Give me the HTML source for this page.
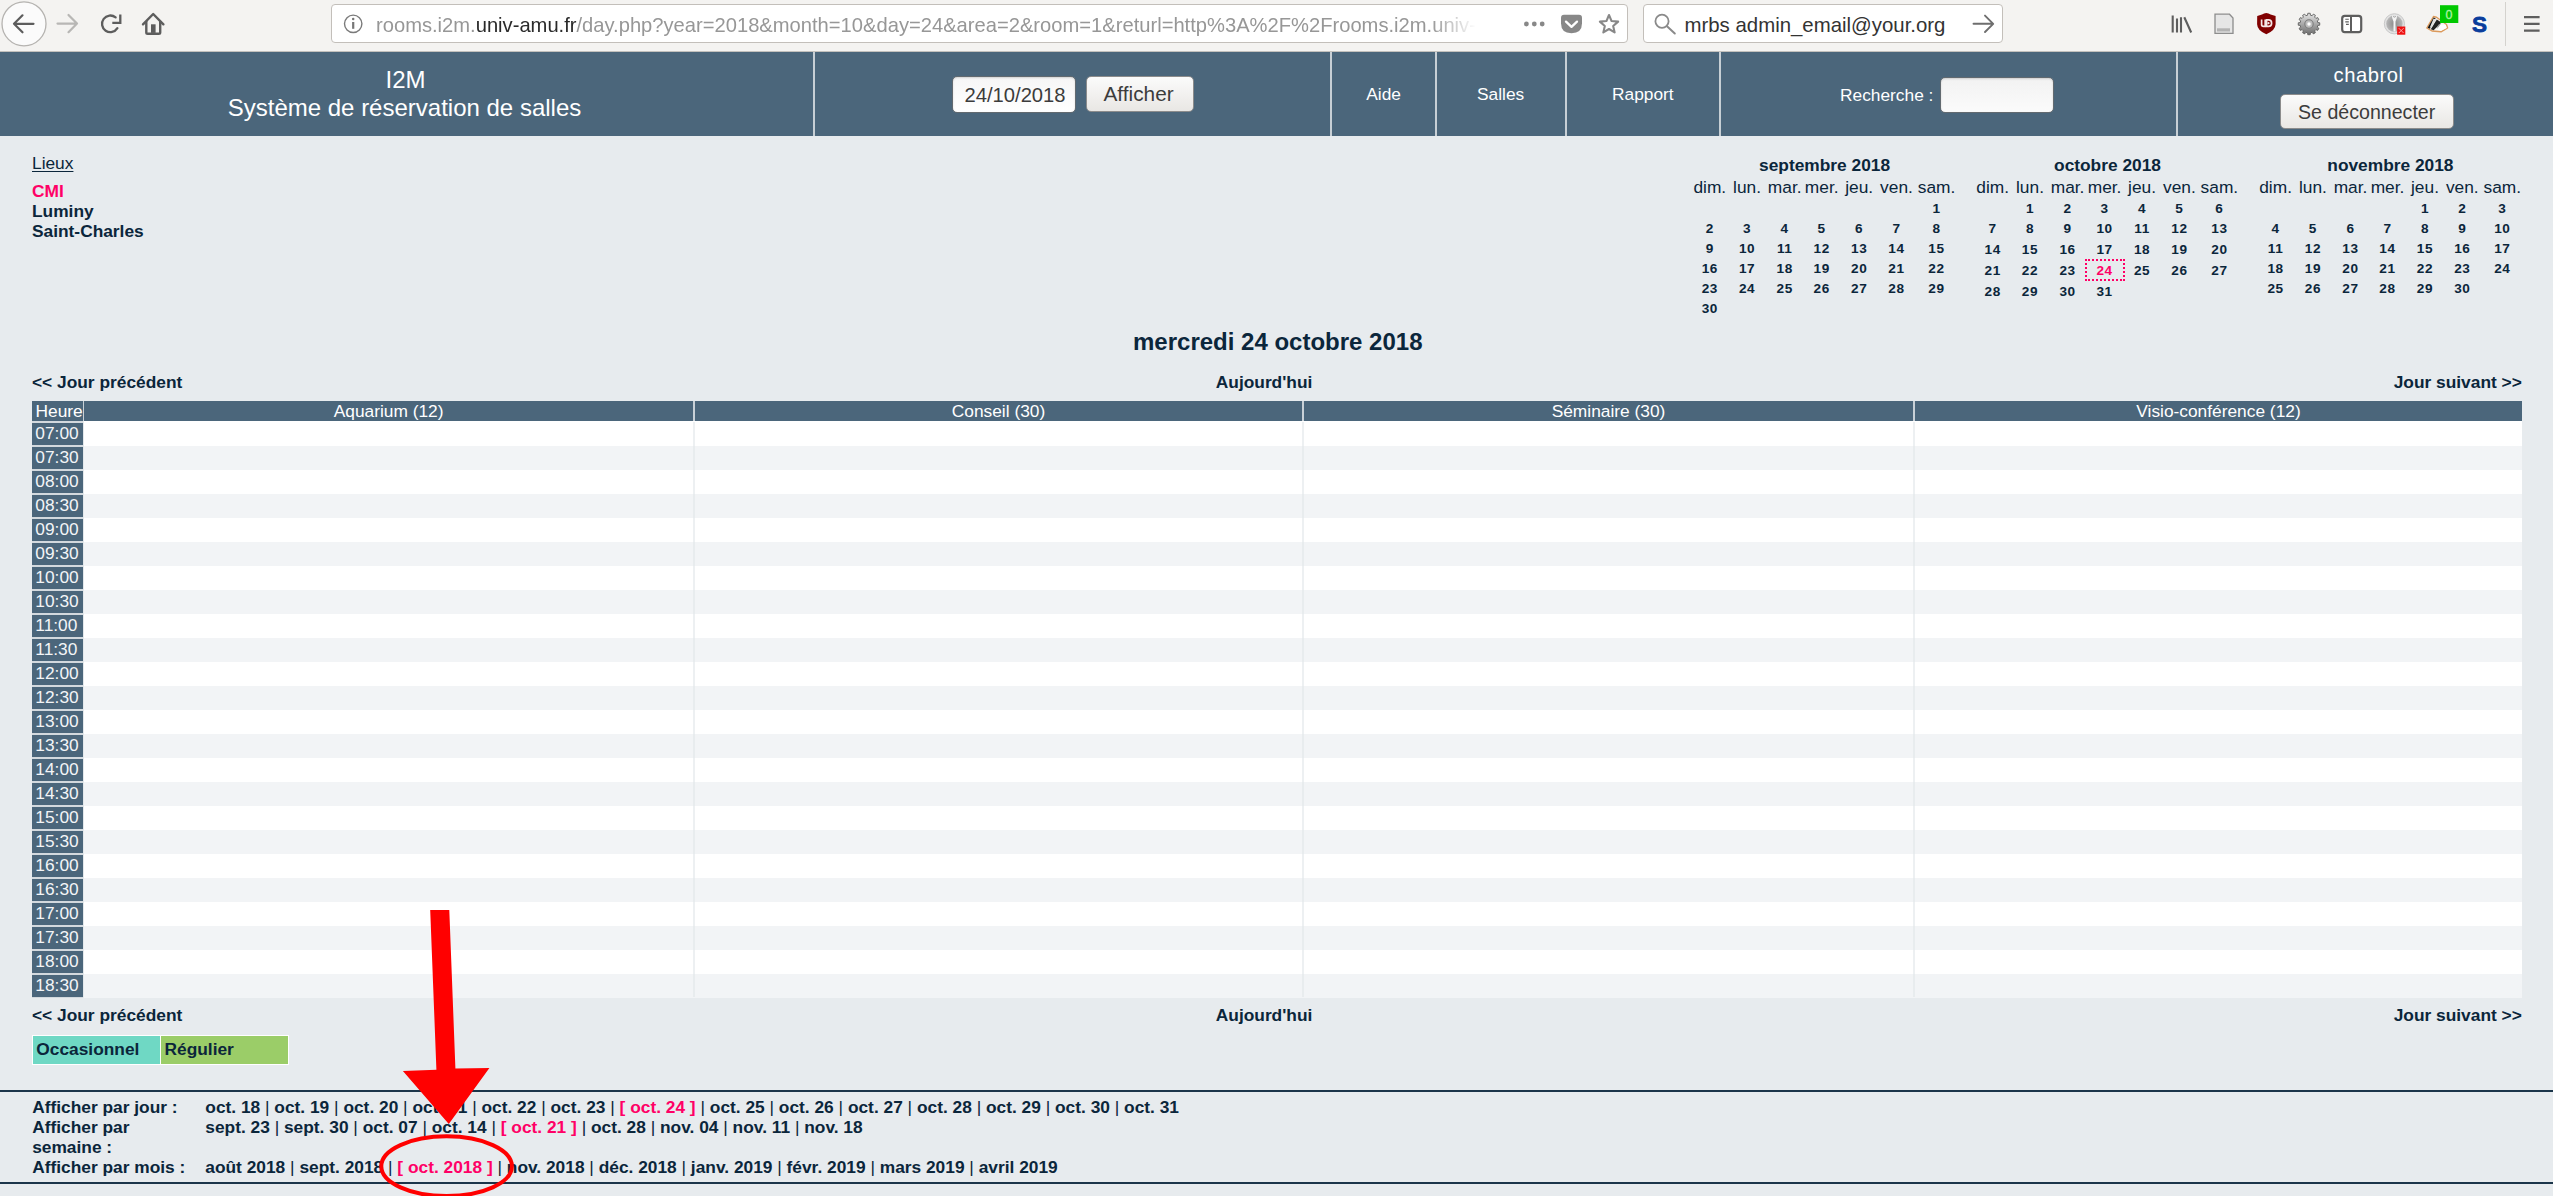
<!DOCTYPE html>
<html><head><meta charset="utf-8"><title>MRBS</title>
<style>
html,body{margin:0;padding:0}
body{width:2553px;height:1196px;overflow:hidden;background:#e7ebee;font-family:"Liberation Sans", sans-serif;color:#0b263b;position:relative}
.a{position:absolute;white-space:pre;line-height:1;font-family:"Liberation Sans", sans-serif}
.r{position:absolute}
svg.r{overflow:visible}
</style></head><body>
<div class="r" style="left:0px;top:0px;width:2553px;height:51px;background:#f4f3f1"></div>
<div class="r" style="left:0px;top:51px;width:2553px;height:1px;background:#c3c1bd"></div>
<svg class="r" style="left:0;top:0" width="2553" height="51" viewBox="0 0 2553 51">
<circle cx="24" cy="23.8" r="22" fill="#fbfbfb" stroke="#b5b3b0" stroke-width="1.3"/>
<path d="M33.5 23.8H14.5M22.5 15.3L14 23.8L22.5 32.3" fill="none" stroke="#5d5d5d" stroke-width="2.2" stroke-linecap="round" stroke-linejoin="round"/>
<path d="M57.5 23.6H77M68.5 15L77 23.6L68.5 32.2" fill="none" stroke="#b8b7b5" stroke-width="2.2" stroke-linecap="round" stroke-linejoin="round"/>
<path d="M117.4 28.2A8.3 8.3 0 1 1 115.6 17.4" fill="none" stroke="#5d5d5d" stroke-width="2.3" stroke-linecap="round"/>
<path d="M112.3 22.9H120.3V14.6" fill="none" stroke="#5d5d5d" stroke-width="2.3"/>
<path d="M143 24.3L153.2 14L163.4 24.3" fill="none" stroke="#5d5d5d" stroke-width="2.4" stroke-linecap="round" stroke-linejoin="round"/>
<path d="M146.3 21V32.5Q146.3 33.8 147.6 33.8H158.8Q160.2 33.8 160.2 32.5V21" fill="none" stroke="#5d5d5d" stroke-width="2.4"/>
<rect x="151" y="24.3" width="4.6" height="8.6" fill="#5d5d5d"/>
</svg>
<div class="r" style="left:331px;top:4px;width:1297px;height:39.2px;background:#fff;border:1px solid #c3bfba;border-radius:4px;box-sizing:border-box"></div>
<svg class="r" style="left:0;top:0" width="2553" height="51" viewBox="0 0 2553 51">
<circle cx="353.2" cy="23.8" r="8.7" fill="none" stroke="#7a7a7a" stroke-width="1.4"/>
<rect x="352.1" y="22" width="2.2" height="6.8" fill="#767676"/><circle cx="353.2" cy="19.1" r="1.25" fill="#767676"/>
<circle cx="1526.4" cy="24" r="2.4" fill="#888"/><circle cx="1534.3" cy="24" r="2.4" fill="#888"/><circle cx="1542.2" cy="24" r="2.4" fill="#888"/>
<path d="M1561 17.8Q1561 14.7 1564 14.7H1579Q1582 14.7 1582 17.8V23.3Q1582 33.2 1571.5 33.2Q1561 33.2 1561 23.3Z" fill="#888"/>
<path d="M1566 21.6L1571.5 26.8L1577 21.6" fill="none" stroke="#fff" stroke-width="2.3" stroke-linecap="round" stroke-linejoin="round"/>
<path d="M1609.00 15.00L1611.59 21.04L1618.13 21.63L1613.18 25.96L1614.64 32.37L1609.00 29.00L1603.36 32.37L1604.82 25.96L1599.87 21.63L1606.41 21.04Z" fill="none" stroke="#888" stroke-width="2.1" stroke-linejoin="round"/>
</svg>
<div class="a" style="left:376px;top:15.43px;font-size:20.17px;color:#979797;width:1100px;overflow:hidden;-webkit-mask-image:linear-gradient(to right,#000 1055px,transparent 1100px)">rooms.i2m.<span style="color:#2a2a2a">univ-amu.fr</span>/day.php?year=2018&amp;month=10&amp;day=24&amp;area=2&amp;room=1&amp;returl=http%3A%2F%2Frooms.i2m.univ-amu.fr</div>
<div class="r" style="left:1643px;top:4px;width:360px;height:39.2px;background:#fff;border:1px solid #c3bfba;border-radius:4px;box-sizing:border-box"></div>
<svg class="r" style="left:0;top:0" width="2553" height="51" viewBox="0 0 2553 51">
<circle cx="1662" cy="21.3" r="6.6" fill="none" stroke="#8a8a8a" stroke-width="1.8"/>
<path d="M1667 26.3L1674.8 33.5" stroke="#8a8a8a" stroke-width="2" stroke-linecap="round"/>
<path d="M1973.5 23.8H1993M1985 15.6L1993.2 23.8L1985 32" fill="none" stroke="#6e6e6e" stroke-width="1.9" stroke-linecap="round" stroke-linejoin="round"/>
</svg>
<div class="a" style="left:1684.50px;top:14.53px;font-size:20.4px;font-weight:400;color:#333;">mrbs admin_email@your.org</div>
<svg class="r" style="left:0;top:0" width="2553" height="51" viewBox="0 0 2553 51">
<path d="M2172.7 15.5V32.5M2177 18.5V32.5M2181 17.3V32.5M2184.3 17.3L2191.2 32.5" stroke="#5e5e5e" stroke-width="2.1" fill="none"/>
<path d="M2215 14.2H2229.5L2233 18V33.4H2215Z" fill="#e6e6e6" stroke="#8d8d8d" stroke-width="1.3"/>
<rect x="2217" y="28.3" width="13" height="3.2" fill="#b3b3b3"/>
<path d="M2257.2 16L2262 14.6Q2264 13.2 2266.3 13.1Q2268.6 13.2 2270.6 14.6L2275.6 16V24.3Q2275.3 30.5 2266.3 34.3Q2257.3 30.5 2257.1 24.3Z" fill="#800000"/>
<path d="M2261.6 19.6V24.5Q2261.6 26.4 2263.4 26.4H2265.2V19.6" fill="none" stroke="#f4e6e6" stroke-width="1.7"/>
<path d="M2266.6 19.9H2268.4Q2271.6 19.9 2271.6 23.2Q2271.6 26.4 2268.4 26.4H2266.6Z" fill="none" stroke="#f4e6e6" stroke-width="1.7"/>
<circle cx="2268.5" cy="23.2" r="1.1" fill="#f4e6e6"/>
<defs><linearGradient id="gg" x1="0" y1="0" x2="0" y2="1"><stop offset="0" stop-color="#e6e6e6"/><stop offset="0.5" stop-color="#a9a9a9"/><stop offset="1" stop-color="#6c6c6c"/></linearGradient>
<radialGradient id="kg"><stop offset="0" stop-color="#8a8a8a"/><stop offset="1" stop-color="#b8b8b8"/></radialGradient></defs>
<path d="M2307.81 13.27L2310.19 13.27L2310.42 15.21L2312.17 15.68L2313.34 14.11L2315.39 15.30L2314.62 17.10L2315.90 18.38L2317.70 17.61L2318.89 19.66L2317.32 20.83L2317.79 22.58L2319.73 22.81L2319.73 25.19L2317.79 25.42L2317.32 27.17L2318.89 28.34L2317.70 30.39L2315.90 29.62L2314.62 30.90L2315.39 32.70L2313.34 33.89L2312.17 32.32L2310.42 32.79L2310.19 34.73L2307.81 34.73L2307.58 32.79L2305.83 32.32L2304.66 33.89L2302.61 32.70L2303.38 30.90L2302.10 29.62L2300.30 30.39L2299.11 28.34L2300.68 27.17L2300.21 25.42L2298.27 25.19L2298.27 22.81L2300.21 22.58L2300.68 20.83L2299.11 19.66L2300.30 17.61L2302.10 18.38L2303.38 17.10L2302.61 15.30L2304.66 14.11L2305.83 15.68L2307.58 15.21Z" fill="url(#gg)" stroke="#5f5f5f" stroke-width="0.9" stroke-linejoin="round"/>
<circle cx="2309" cy="24.0" r="4.2" fill="#bdbdbd" stroke="#7a7a7a" stroke-width="1.1"/>
<circle cx="2309" cy="24.0" r="1.7" fill="#fff"/>
<rect x="2342.2" y="15.8" width="19" height="16.4" rx="2.6" fill="#fff" stroke="#5e5e5e" stroke-width="2.2"/>
<path d="M2351 16V32" stroke="#5e5e5e" stroke-width="2"/>
<path d="M2345.3 19.3H2348.8M2345.3 21.9H2348.8M2346 24.4H2348.8" stroke="#5e5e5e" stroke-width="1.1"/>
<circle cx="2394.4" cy="23.8" r="10.1" fill="#e2e2e2" stroke="#c8c8c8" stroke-width="1"/>
<circle cx="2394.4" cy="23.8" r="8.2" fill="url(#kg)"/>
<path d="M2392 15.6H2397L2396.8 18L2395.5 21.5V31.5H2393.5V21.5L2392.2 18Z" fill="#f4f4f4"/>
<path d="M2393.2 16.5Q2394.4 17.6 2395.8 16.5" stroke="#8a8a8a" stroke-width="0.9" fill="none"/>
<rect x="2397.1" y="26.5" width="8.2" height="8.2" fill="#ee1111"/>
<path d="M2398.8 28.2L2403.6 33M2403.6 28.2L2398.8 33" stroke="#ffb0b0" stroke-width="0.9"/>
<path d="M2426.8 28L2433.5 16.5L2436.5 17.2L2441 20.5L2446.5 24.5L2447.6 28L2441 31.8L2432 31Z" fill="#f6f6f6" stroke="#d88a40" stroke-width="1.4" stroke-linejoin="round" opacity="0.85"/>
<path d="M2427.6 27.7L2433.6 17.4L2435.6 18.3L2430 28.8Z" fill="#111"/>
<path d="M2436.8 19.6L2441.5 22.4L2433.6 30.2L2430.8 29.2Z" fill="#222"/>
<path d="M2433.6 18.5L2436 19.6L2431.5 27.5L2429.8 27.6Z" fill="#e0e0e0"/>
<path d="M2440 24.5L2445.8 25L2446.6 28L2441 30.8L2436.5 29.5Z" fill="#fff"/>
<path d="M2438 25L2441.5 23L2437 29Z" fill="#9a9a9a"/>
<rect x="2440" y="5.2" width="18.3" height="17.8" fill="#00c800"/>
<text x="2449.1" y="18.7" font-family="Liberation Sans" font-size="12.5" fill="#b5f5a5" stroke="#9ef0a0" stroke-width="0.3" text-anchor="middle">0</text>
<circle cx="2479.5" cy="24" r="8.5" fill="#fff" opacity="0.6"/>
<text x="2479.6" y="32.3" font-family="Liberation Sans" font-size="22.5" font-weight="700" fill="#0a3d9c" stroke="#0a3d9c" stroke-width="0.8" text-anchor="middle">S</text>
<path d="M2505.5 2V46" stroke="#d4d2ce" stroke-width="1"/>
<path d="M2524 17.1H2539.6M2524 23.9H2539.6M2524 30.6H2539.6" stroke="#5e5e5e" stroke-width="2.4"/>
</svg>
<div class="r" style="left:0px;top:52px;width:2553px;height:84px;background:#4b667b"></div>
<div class="r" style="left:813px;top:52px;width:2px;height:84px;background:#c7cfd5"></div>
<div class="r" style="left:1330px;top:52px;width:2px;height:84px;background:#c7cfd5"></div>
<div class="r" style="left:1434.5px;top:52px;width:2.0px;height:84px;background:#c7cfd5"></div>
<div class="r" style="left:1565px;top:52px;width:2px;height:84px;background:#c7cfd5"></div>
<div class="r" style="left:1718.5px;top:52px;width:2.0px;height:84px;background:#c7cfd5"></div>
<div class="r" style="left:2175.5px;top:52px;width:2.0px;height:84px;background:#c7cfd5"></div>
<div class="a" style="left:-594.50px;width:2000px;text-align:center;top:67.68px;font-size:24px;font-weight:400;color:#fff;">I2M</div>
<div class="a" style="left:-595.50px;width:2000px;text-align:center;top:95.98px;font-size:24px;font-weight:400;color:#fff;">Système de réservation de salles</div>
<div class="r" style="left:951.5px;top:76px;width:124.0px;height:36.5px;background:linear-gradient(#f6f6f6,#fff);border:1px solid #626a70;border-radius:5px;box-sizing:border-box;box-shadow:inset 0 1px 2px rgba(0,0,0,.15)"></div>
<div class="a" style="left:964.50px;top:84.90px;font-size:20.2px;font-weight:400;color:#3c3c3c;">24/10/2018</div>
<div class="r" style="left:1085.5px;top:76px;width:108.5px;height:35.5px;background:linear-gradient(#fbfbfb,#e9e7e4);border:1px solid #8c8c8c;border-radius:5px;box-sizing:border-box"></div>
<div class="a" style="left:1103.50px;top:84.39px;font-size:20.8px;font-weight:400;color:#3c3c3c;">Afficher</div>
<div class="a" style="left:1366.30px;top:85.63px;font-size:17.33px;font-weight:400;color:#fff;">Aide</div>
<div class="a" style="left:1477.00px;top:85.63px;font-size:17.33px;font-weight:400;color:#fff;">Salles</div>
<div class="a" style="left:1612.00px;top:85.63px;font-size:17.33px;font-weight:400;color:#fff;">Rapport</div>
<div class="a" style="left:1840.00px;top:87.13px;font-size:17.33px;font-weight:400;color:#fff;">Recherche :</div>
<div class="r" style="left:1939.5px;top:76.5px;width:114.5px;height:36.0px;background:linear-gradient(#f2f2f2,#fbfbfb);border:1px solid #626a70;border-radius:5px;box-sizing:border-box;box-shadow:inset 0 1px 2px rgba(0,0,0,.15)"></div>
<div class="a" style="left:2333.50px;top:65.10px;font-size:20.2px;font-weight:400;color:#fff;letter-spacing:0.55px">chabrol</div>
<div class="r" style="left:2280px;top:93.5px;width:174px;height:35.5px;background:linear-gradient(#fbfbfb,#e9e7e4);border:1px solid #8c8c8c;border-radius:5px;box-sizing:border-box"></div>
<div class="a" style="left:2298.00px;top:102.91px;font-size:19.6px;font-weight:400;color:#3c3c3c;">Se déconnecter</div>
<div class="a" style="left:32.00px;top:155.13px;font-size:17.33px;font-weight:400;color:#0b263b;text-decoration:underline;text-underline-offset:1.8px;text-decoration-thickness:1.4px">Lieux</div>
<div class="a" style="left:32.00px;top:183.13px;font-size:17.33px;font-weight:700;color:#ff0066;">CMI</div>
<div class="a" style="left:32.00px;top:203.13px;font-size:17.33px;font-weight:700;color:#0b263b;">Luminy</div>
<div class="a" style="left:32.00px;top:223.03px;font-size:17.33px;font-weight:700;color:#0b263b;">Saint-Charles</div>
<div class="a" style="left:824.60px;width:2000px;text-align:center;top:156.83px;font-size:17.33px;font-weight:700;color:#0b263b;">septembre 2018</div>
<div class="a" style="left:709.80px;width:2000px;text-align:center;top:179.13px;font-size:17.33px;font-weight:400;color:#0b263b;">dim.</div>
<div class="a" style="left:747.10px;width:2000px;text-align:center;top:179.13px;font-size:17.33px;font-weight:400;color:#0b263b;">lun.</div>
<div class="a" style="left:784.70px;width:2000px;text-align:center;top:179.13px;font-size:17.33px;font-weight:400;color:#0b263b;">mar.</div>
<div class="a" style="left:821.70px;width:2000px;text-align:center;top:179.13px;font-size:17.33px;font-weight:400;color:#0b263b;">mer.</div>
<div class="a" style="left:859.20px;width:2000px;text-align:center;top:179.13px;font-size:17.33px;font-weight:400;color:#0b263b;">jeu.</div>
<div class="a" style="left:896.50px;width:2000px;text-align:center;top:179.13px;font-size:17.33px;font-weight:400;color:#0b263b;">ven.</div>
<div class="a" style="left:936.50px;width:2000px;text-align:center;top:179.13px;font-size:17.33px;font-weight:400;color:#0b263b;">sam.</div>
<div class="a" style="left:936.50px;width:2000px;text-align:center;top:202.49px;font-size:13.6px;font-weight:700;color:#0b263b;letter-spacing:0.6px">1</div>
<div class="a" style="left:709.80px;width:2000px;text-align:center;top:222.49px;font-size:13.6px;font-weight:700;color:#0b263b;letter-spacing:0.6px">2</div>
<div class="a" style="left:747.10px;width:2000px;text-align:center;top:222.49px;font-size:13.6px;font-weight:700;color:#0b263b;letter-spacing:0.6px">3</div>
<div class="a" style="left:784.70px;width:2000px;text-align:center;top:222.49px;font-size:13.6px;font-weight:700;color:#0b263b;letter-spacing:0.6px">4</div>
<div class="a" style="left:821.70px;width:2000px;text-align:center;top:222.49px;font-size:13.6px;font-weight:700;color:#0b263b;letter-spacing:0.6px">5</div>
<div class="a" style="left:859.20px;width:2000px;text-align:center;top:222.49px;font-size:13.6px;font-weight:700;color:#0b263b;letter-spacing:0.6px">6</div>
<div class="a" style="left:896.50px;width:2000px;text-align:center;top:222.49px;font-size:13.6px;font-weight:700;color:#0b263b;letter-spacing:0.6px">7</div>
<div class="a" style="left:936.50px;width:2000px;text-align:center;top:222.49px;font-size:13.6px;font-weight:700;color:#0b263b;letter-spacing:0.6px">8</div>
<div class="a" style="left:709.80px;width:2000px;text-align:center;top:242.49px;font-size:13.6px;font-weight:700;color:#0b263b;letter-spacing:0.6px">9</div>
<div class="a" style="left:747.10px;width:2000px;text-align:center;top:242.49px;font-size:13.6px;font-weight:700;color:#0b263b;letter-spacing:0.6px">10</div>
<div class="a" style="left:784.70px;width:2000px;text-align:center;top:242.49px;font-size:13.6px;font-weight:700;color:#0b263b;letter-spacing:0.6px">11</div>
<div class="a" style="left:821.70px;width:2000px;text-align:center;top:242.49px;font-size:13.6px;font-weight:700;color:#0b263b;letter-spacing:0.6px">12</div>
<div class="a" style="left:859.20px;width:2000px;text-align:center;top:242.49px;font-size:13.6px;font-weight:700;color:#0b263b;letter-spacing:0.6px">13</div>
<div class="a" style="left:896.50px;width:2000px;text-align:center;top:242.49px;font-size:13.6px;font-weight:700;color:#0b263b;letter-spacing:0.6px">14</div>
<div class="a" style="left:936.50px;width:2000px;text-align:center;top:242.49px;font-size:13.6px;font-weight:700;color:#0b263b;letter-spacing:0.6px">15</div>
<div class="a" style="left:709.80px;width:2000px;text-align:center;top:262.49px;font-size:13.6px;font-weight:700;color:#0b263b;letter-spacing:0.6px">16</div>
<div class="a" style="left:747.10px;width:2000px;text-align:center;top:262.49px;font-size:13.6px;font-weight:700;color:#0b263b;letter-spacing:0.6px">17</div>
<div class="a" style="left:784.70px;width:2000px;text-align:center;top:262.49px;font-size:13.6px;font-weight:700;color:#0b263b;letter-spacing:0.6px">18</div>
<div class="a" style="left:821.70px;width:2000px;text-align:center;top:262.49px;font-size:13.6px;font-weight:700;color:#0b263b;letter-spacing:0.6px">19</div>
<div class="a" style="left:859.20px;width:2000px;text-align:center;top:262.49px;font-size:13.6px;font-weight:700;color:#0b263b;letter-spacing:0.6px">20</div>
<div class="a" style="left:896.50px;width:2000px;text-align:center;top:262.49px;font-size:13.6px;font-weight:700;color:#0b263b;letter-spacing:0.6px">21</div>
<div class="a" style="left:936.50px;width:2000px;text-align:center;top:262.49px;font-size:13.6px;font-weight:700;color:#0b263b;letter-spacing:0.6px">22</div>
<div class="a" style="left:709.80px;width:2000px;text-align:center;top:282.49px;font-size:13.6px;font-weight:700;color:#0b263b;letter-spacing:0.6px">23</div>
<div class="a" style="left:747.10px;width:2000px;text-align:center;top:282.49px;font-size:13.6px;font-weight:700;color:#0b263b;letter-spacing:0.6px">24</div>
<div class="a" style="left:784.70px;width:2000px;text-align:center;top:282.49px;font-size:13.6px;font-weight:700;color:#0b263b;letter-spacing:0.6px">25</div>
<div class="a" style="left:821.70px;width:2000px;text-align:center;top:282.49px;font-size:13.6px;font-weight:700;color:#0b263b;letter-spacing:0.6px">26</div>
<div class="a" style="left:859.20px;width:2000px;text-align:center;top:282.49px;font-size:13.6px;font-weight:700;color:#0b263b;letter-spacing:0.6px">27</div>
<div class="a" style="left:896.50px;width:2000px;text-align:center;top:282.49px;font-size:13.6px;font-weight:700;color:#0b263b;letter-spacing:0.6px">28</div>
<div class="a" style="left:936.50px;width:2000px;text-align:center;top:282.49px;font-size:13.6px;font-weight:700;color:#0b263b;letter-spacing:0.6px">29</div>
<div class="a" style="left:709.80px;width:2000px;text-align:center;top:302.49px;font-size:13.6px;font-weight:700;color:#0b263b;letter-spacing:0.6px">30</div>
<div class="a" style="left:1107.50px;width:2000px;text-align:center;top:156.83px;font-size:17.33px;font-weight:700;color:#0b263b;">octobre 2018</div>
<div class="a" style="left:992.70px;width:2000px;text-align:center;top:179.13px;font-size:17.33px;font-weight:400;color:#0b263b;">dim.</div>
<div class="a" style="left:1030.00px;width:2000px;text-align:center;top:179.13px;font-size:17.33px;font-weight:400;color:#0b263b;">lun.</div>
<div class="a" style="left:1067.60px;width:2000px;text-align:center;top:179.13px;font-size:17.33px;font-weight:400;color:#0b263b;">mar.</div>
<div class="a" style="left:1104.60px;width:2000px;text-align:center;top:179.13px;font-size:17.33px;font-weight:400;color:#0b263b;">mer.</div>
<div class="a" style="left:1142.10px;width:2000px;text-align:center;top:179.13px;font-size:17.33px;font-weight:400;color:#0b263b;">jeu.</div>
<div class="a" style="left:1179.40px;width:2000px;text-align:center;top:179.13px;font-size:17.33px;font-weight:400;color:#0b263b;">ven.</div>
<div class="a" style="left:1219.40px;width:2000px;text-align:center;top:179.13px;font-size:17.33px;font-weight:400;color:#0b263b;">sam.</div>
<div class="a" style="left:1030.00px;width:2000px;text-align:center;top:202.49px;font-size:13.6px;font-weight:700;color:#0b263b;letter-spacing:0.6px">1</div>
<div class="a" style="left:1067.60px;width:2000px;text-align:center;top:202.49px;font-size:13.6px;font-weight:700;color:#0b263b;letter-spacing:0.6px">2</div>
<div class="a" style="left:1104.60px;width:2000px;text-align:center;top:202.49px;font-size:13.6px;font-weight:700;color:#0b263b;letter-spacing:0.6px">3</div>
<div class="a" style="left:1142.10px;width:2000px;text-align:center;top:202.49px;font-size:13.6px;font-weight:700;color:#0b263b;letter-spacing:0.6px">4</div>
<div class="a" style="left:1179.40px;width:2000px;text-align:center;top:202.49px;font-size:13.6px;font-weight:700;color:#0b263b;letter-spacing:0.6px">5</div>
<div class="a" style="left:1219.40px;width:2000px;text-align:center;top:202.49px;font-size:13.6px;font-weight:700;color:#0b263b;letter-spacing:0.6px">6</div>
<div class="a" style="left:992.70px;width:2000px;text-align:center;top:222.49px;font-size:13.6px;font-weight:700;color:#0b263b;letter-spacing:0.6px">7</div>
<div class="a" style="left:1030.00px;width:2000px;text-align:center;top:222.49px;font-size:13.6px;font-weight:700;color:#0b263b;letter-spacing:0.6px">8</div>
<div class="a" style="left:1067.60px;width:2000px;text-align:center;top:222.49px;font-size:13.6px;font-weight:700;color:#0b263b;letter-spacing:0.6px">9</div>
<div class="a" style="left:1104.60px;width:2000px;text-align:center;top:222.49px;font-size:13.6px;font-weight:700;color:#0b263b;letter-spacing:0.6px">10</div>
<div class="a" style="left:1142.10px;width:2000px;text-align:center;top:222.49px;font-size:13.6px;font-weight:700;color:#0b263b;letter-spacing:0.6px">11</div>
<div class="a" style="left:1179.40px;width:2000px;text-align:center;top:222.49px;font-size:13.6px;font-weight:700;color:#0b263b;letter-spacing:0.6px">12</div>
<div class="a" style="left:1219.40px;width:2000px;text-align:center;top:222.49px;font-size:13.6px;font-weight:700;color:#0b263b;letter-spacing:0.6px">13</div>
<div class="a" style="left:992.70px;width:2000px;text-align:center;top:242.89px;font-size:13.6px;font-weight:700;color:#0b263b;letter-spacing:0.6px">14</div>
<div class="a" style="left:1030.00px;width:2000px;text-align:center;top:242.89px;font-size:13.6px;font-weight:700;color:#0b263b;letter-spacing:0.6px">15</div>
<div class="a" style="left:1067.60px;width:2000px;text-align:center;top:242.89px;font-size:13.6px;font-weight:700;color:#0b263b;letter-spacing:0.6px">16</div>
<div class="a" style="left:1104.60px;width:2000px;text-align:center;top:242.89px;font-size:13.6px;font-weight:700;color:#0b263b;letter-spacing:0.6px">17</div>
<div class="a" style="left:1142.10px;width:2000px;text-align:center;top:242.89px;font-size:13.6px;font-weight:700;color:#0b263b;letter-spacing:0.6px">18</div>
<div class="a" style="left:1179.40px;width:2000px;text-align:center;top:242.89px;font-size:13.6px;font-weight:700;color:#0b263b;letter-spacing:0.6px">19</div>
<div class="a" style="left:1219.40px;width:2000px;text-align:center;top:242.89px;font-size:13.6px;font-weight:700;color:#0b263b;letter-spacing:0.6px">20</div>
<div class="a" style="left:992.70px;width:2000px;text-align:center;top:264.29px;font-size:13.6px;font-weight:700;color:#0b263b;letter-spacing:0.6px">21</div>
<div class="a" style="left:1030.00px;width:2000px;text-align:center;top:264.29px;font-size:13.6px;font-weight:700;color:#0b263b;letter-spacing:0.6px">22</div>
<div class="a" style="left:1067.60px;width:2000px;text-align:center;top:264.29px;font-size:13.6px;font-weight:700;color:#0b263b;letter-spacing:0.6px">23</div>
<div class="a" style="left:1104.60px;width:2000px;text-align:center;top:264.29px;font-size:13.6px;font-weight:700;color:#ff0066;letter-spacing:0.6px">24</div>
<div class="a" style="left:1142.10px;width:2000px;text-align:center;top:264.29px;font-size:13.6px;font-weight:700;color:#0b263b;letter-spacing:0.6px">25</div>
<div class="a" style="left:1179.40px;width:2000px;text-align:center;top:264.29px;font-size:13.6px;font-weight:700;color:#0b263b;letter-spacing:0.6px">26</div>
<div class="a" style="left:1219.40px;width:2000px;text-align:center;top:264.29px;font-size:13.6px;font-weight:700;color:#0b263b;letter-spacing:0.6px">27</div>
<div class="a" style="left:992.70px;width:2000px;text-align:center;top:285.29px;font-size:13.6px;font-weight:700;color:#0b263b;letter-spacing:0.6px">28</div>
<div class="a" style="left:1030.00px;width:2000px;text-align:center;top:285.29px;font-size:13.6px;font-weight:700;color:#0b263b;letter-spacing:0.6px">29</div>
<div class="a" style="left:1067.60px;width:2000px;text-align:center;top:285.29px;font-size:13.6px;font-weight:700;color:#0b263b;letter-spacing:0.6px">30</div>
<div class="a" style="left:1104.60px;width:2000px;text-align:center;top:285.29px;font-size:13.6px;font-weight:700;color:#0b263b;letter-spacing:0.6px">31</div>
<div class="a" style="left:1390.40px;width:2000px;text-align:center;top:156.83px;font-size:17.33px;font-weight:700;color:#0b263b;">novembre 2018</div>
<div class="a" style="left:1275.60px;width:2000px;text-align:center;top:179.13px;font-size:17.33px;font-weight:400;color:#0b263b;">dim.</div>
<div class="a" style="left:1312.90px;width:2000px;text-align:center;top:179.13px;font-size:17.33px;font-weight:400;color:#0b263b;">lun.</div>
<div class="a" style="left:1350.50px;width:2000px;text-align:center;top:179.13px;font-size:17.33px;font-weight:400;color:#0b263b;">mar.</div>
<div class="a" style="left:1387.50px;width:2000px;text-align:center;top:179.13px;font-size:17.33px;font-weight:400;color:#0b263b;">mer.</div>
<div class="a" style="left:1425.00px;width:2000px;text-align:center;top:179.13px;font-size:17.33px;font-weight:400;color:#0b263b;">jeu.</div>
<div class="a" style="left:1462.30px;width:2000px;text-align:center;top:179.13px;font-size:17.33px;font-weight:400;color:#0b263b;">ven.</div>
<div class="a" style="left:1502.30px;width:2000px;text-align:center;top:179.13px;font-size:17.33px;font-weight:400;color:#0b263b;">sam.</div>
<div class="a" style="left:1425.00px;width:2000px;text-align:center;top:202.49px;font-size:13.6px;font-weight:700;color:#0b263b;letter-spacing:0.6px">1</div>
<div class="a" style="left:1462.30px;width:2000px;text-align:center;top:202.49px;font-size:13.6px;font-weight:700;color:#0b263b;letter-spacing:0.6px">2</div>
<div class="a" style="left:1502.30px;width:2000px;text-align:center;top:202.49px;font-size:13.6px;font-weight:700;color:#0b263b;letter-spacing:0.6px">3</div>
<div class="a" style="left:1275.60px;width:2000px;text-align:center;top:222.49px;font-size:13.6px;font-weight:700;color:#0b263b;letter-spacing:0.6px">4</div>
<div class="a" style="left:1312.90px;width:2000px;text-align:center;top:222.49px;font-size:13.6px;font-weight:700;color:#0b263b;letter-spacing:0.6px">5</div>
<div class="a" style="left:1350.50px;width:2000px;text-align:center;top:222.49px;font-size:13.6px;font-weight:700;color:#0b263b;letter-spacing:0.6px">6</div>
<div class="a" style="left:1387.50px;width:2000px;text-align:center;top:222.49px;font-size:13.6px;font-weight:700;color:#0b263b;letter-spacing:0.6px">7</div>
<div class="a" style="left:1425.00px;width:2000px;text-align:center;top:222.49px;font-size:13.6px;font-weight:700;color:#0b263b;letter-spacing:0.6px">8</div>
<div class="a" style="left:1462.30px;width:2000px;text-align:center;top:222.49px;font-size:13.6px;font-weight:700;color:#0b263b;letter-spacing:0.6px">9</div>
<div class="a" style="left:1502.30px;width:2000px;text-align:center;top:222.49px;font-size:13.6px;font-weight:700;color:#0b263b;letter-spacing:0.6px">10</div>
<div class="a" style="left:1275.60px;width:2000px;text-align:center;top:242.49px;font-size:13.6px;font-weight:700;color:#0b263b;letter-spacing:0.6px">11</div>
<div class="a" style="left:1312.90px;width:2000px;text-align:center;top:242.49px;font-size:13.6px;font-weight:700;color:#0b263b;letter-spacing:0.6px">12</div>
<div class="a" style="left:1350.50px;width:2000px;text-align:center;top:242.49px;font-size:13.6px;font-weight:700;color:#0b263b;letter-spacing:0.6px">13</div>
<div class="a" style="left:1387.50px;width:2000px;text-align:center;top:242.49px;font-size:13.6px;font-weight:700;color:#0b263b;letter-spacing:0.6px">14</div>
<div class="a" style="left:1425.00px;width:2000px;text-align:center;top:242.49px;font-size:13.6px;font-weight:700;color:#0b263b;letter-spacing:0.6px">15</div>
<div class="a" style="left:1462.30px;width:2000px;text-align:center;top:242.49px;font-size:13.6px;font-weight:700;color:#0b263b;letter-spacing:0.6px">16</div>
<div class="a" style="left:1502.30px;width:2000px;text-align:center;top:242.49px;font-size:13.6px;font-weight:700;color:#0b263b;letter-spacing:0.6px">17</div>
<div class="a" style="left:1275.60px;width:2000px;text-align:center;top:262.49px;font-size:13.6px;font-weight:700;color:#0b263b;letter-spacing:0.6px">18</div>
<div class="a" style="left:1312.90px;width:2000px;text-align:center;top:262.49px;font-size:13.6px;font-weight:700;color:#0b263b;letter-spacing:0.6px">19</div>
<div class="a" style="left:1350.50px;width:2000px;text-align:center;top:262.49px;font-size:13.6px;font-weight:700;color:#0b263b;letter-spacing:0.6px">20</div>
<div class="a" style="left:1387.50px;width:2000px;text-align:center;top:262.49px;font-size:13.6px;font-weight:700;color:#0b263b;letter-spacing:0.6px">21</div>
<div class="a" style="left:1425.00px;width:2000px;text-align:center;top:262.49px;font-size:13.6px;font-weight:700;color:#0b263b;letter-spacing:0.6px">22</div>
<div class="a" style="left:1462.30px;width:2000px;text-align:center;top:262.49px;font-size:13.6px;font-weight:700;color:#0b263b;letter-spacing:0.6px">23</div>
<div class="a" style="left:1502.30px;width:2000px;text-align:center;top:262.49px;font-size:13.6px;font-weight:700;color:#0b263b;letter-spacing:0.6px">24</div>
<div class="a" style="left:1275.60px;width:2000px;text-align:center;top:282.49px;font-size:13.6px;font-weight:700;color:#0b263b;letter-spacing:0.6px">25</div>
<div class="a" style="left:1312.90px;width:2000px;text-align:center;top:282.49px;font-size:13.6px;font-weight:700;color:#0b263b;letter-spacing:0.6px">26</div>
<div class="a" style="left:1350.50px;width:2000px;text-align:center;top:282.49px;font-size:13.6px;font-weight:700;color:#0b263b;letter-spacing:0.6px">27</div>
<div class="a" style="left:1387.50px;width:2000px;text-align:center;top:282.49px;font-size:13.6px;font-weight:700;color:#0b263b;letter-spacing:0.6px">28</div>
<div class="a" style="left:1425.00px;width:2000px;text-align:center;top:282.49px;font-size:13.6px;font-weight:700;color:#0b263b;letter-spacing:0.6px">29</div>
<div class="a" style="left:1462.30px;width:2000px;text-align:center;top:282.49px;font-size:13.6px;font-weight:700;color:#0b263b;letter-spacing:0.6px">30</div>
<div class="r" style="left:2085px;top:258.7px;width:40px;height:22.30000000000001px;border:2px dotted #ff0066;box-sizing:border-box"></div>
<div class="a" style="left:1133.00px;top:329.58px;font-size:24px;font-weight:700;color:#0b263b;">mercredi 24 octobre 2018</div>
<div class="a" style="left:32.00px;top:374.13px;font-size:17.33px;font-weight:700;color:#0b263b;">&lt;&lt; Jour précédent</div>
<div class="a" style="left:1215.80px;top:374.13px;font-size:17.33px;font-weight:700;color:#0b263b;">Aujourd&#x27;hui</div>
<div class="a" style="left:521.80px;width:2000px;text-align:right;top:374.13px;font-size:17.33px;font-weight:700;color:#0b263b;">Jour suivant &gt;&gt;</div>
<div class="r" style="left:32px;top:401px;width:2490px;height:20px;background:#4b667b"></div>
<div class="r" style="left:82.7px;top:401px;width:1.5px;height:20px;background:#c9d1d7"></div>
<div class="r" style="left:693px;top:401px;width:2px;height:20px;background:#c9d1d7"></div>
<div class="r" style="left:1302px;top:401px;width:2px;height:20px;background:#c9d1d7"></div>
<div class="r" style="left:1913px;top:401px;width:2px;height:20px;background:#c9d1d7"></div>
<div class="a" style="left:35.50px;top:403.03px;font-size:17.33px;font-weight:400;color:#fff;">Heure</div>
<div class="a" style="left:-611.40px;width:2000px;text-align:center;top:403.03px;font-size:17.33px;font-weight:400;color:#fff;">Aquarium (12)</div>
<div class="a" style="left:-1.50px;width:2000px;text-align:center;top:403.03px;font-size:17.33px;font-weight:400;color:#fff;">Conseil (30)</div>
<div class="a" style="left:608.50px;width:2000px;text-align:center;top:403.03px;font-size:17.33px;font-weight:400;color:#fff;">Séminaire (30)</div>
<div class="a" style="left:1218.50px;width:2000px;text-align:center;top:403.03px;font-size:17.33px;font-weight:400;color:#fff;">Visio-conférence (12)</div>
<div class="r" style="left:84.2px;top:421px;width:2437.8px;height:1px;background:#ffffff"></div>
<div class="r" style="left:32px;top:421px;width:50.7px;height:2px;background:#d3d9de"></div>
<div class="r" style="left:84.2px;top:422px;width:2437.8px;height:24px;background:#ffffff"></div>
<div class="r" style="left:32px;top:422px;width:50.7px;height:24px;background:#d3d9de"></div>
<div class="r" style="left:32px;top:423px;width:50.7px;height:22px;background:#4b667b"></div>
<div class="a" style="left:35.30px;top:425.13px;font-size:17.33px;font-weight:400;color:#f3f5f7;">07:00</div>
<div class="r" style="left:84.2px;top:446px;width:2437.8px;height:24px;background:#f2f4f6"></div>
<div class="r" style="left:32px;top:446px;width:50.7px;height:24px;background:#d3d9de"></div>
<div class="r" style="left:32px;top:447px;width:50.7px;height:22px;background:#4b667b"></div>
<div class="a" style="left:35.30px;top:449.13px;font-size:17.33px;font-weight:400;color:#f3f5f7;">07:30</div>
<div class="r" style="left:84.2px;top:470px;width:2437.8px;height:24px;background:#ffffff"></div>
<div class="r" style="left:32px;top:470px;width:50.7px;height:24px;background:#d3d9de"></div>
<div class="r" style="left:32px;top:471px;width:50.7px;height:22px;background:#4b667b"></div>
<div class="a" style="left:35.30px;top:473.13px;font-size:17.33px;font-weight:400;color:#f3f5f7;">08:00</div>
<div class="r" style="left:84.2px;top:494px;width:2437.8px;height:24px;background:#f2f4f6"></div>
<div class="r" style="left:32px;top:494px;width:50.7px;height:24px;background:#d3d9de"></div>
<div class="r" style="left:32px;top:495px;width:50.7px;height:22px;background:#4b667b"></div>
<div class="a" style="left:35.30px;top:497.13px;font-size:17.33px;font-weight:400;color:#f3f5f7;">08:30</div>
<div class="r" style="left:84.2px;top:518px;width:2437.8px;height:24px;background:#ffffff"></div>
<div class="r" style="left:32px;top:518px;width:50.7px;height:24px;background:#d3d9de"></div>
<div class="r" style="left:32px;top:519px;width:50.7px;height:22px;background:#4b667b"></div>
<div class="a" style="left:35.30px;top:521.13px;font-size:17.33px;font-weight:400;color:#f3f5f7;">09:00</div>
<div class="r" style="left:84.2px;top:542px;width:2437.8px;height:24px;background:#f2f4f6"></div>
<div class="r" style="left:32px;top:542px;width:50.7px;height:24px;background:#d3d9de"></div>
<div class="r" style="left:32px;top:543px;width:50.7px;height:22px;background:#4b667b"></div>
<div class="a" style="left:35.30px;top:545.13px;font-size:17.33px;font-weight:400;color:#f3f5f7;">09:30</div>
<div class="r" style="left:84.2px;top:566px;width:2437.8px;height:24px;background:#ffffff"></div>
<div class="r" style="left:32px;top:566px;width:50.7px;height:24px;background:#d3d9de"></div>
<div class="r" style="left:32px;top:567px;width:50.7px;height:22px;background:#4b667b"></div>
<div class="a" style="left:35.30px;top:569.13px;font-size:17.33px;font-weight:400;color:#f3f5f7;">10:00</div>
<div class="r" style="left:84.2px;top:590px;width:2437.8px;height:24px;background:#f2f4f6"></div>
<div class="r" style="left:32px;top:590px;width:50.7px;height:24px;background:#d3d9de"></div>
<div class="r" style="left:32px;top:591px;width:50.7px;height:22px;background:#4b667b"></div>
<div class="a" style="left:35.30px;top:593.13px;font-size:17.33px;font-weight:400;color:#f3f5f7;">10:30</div>
<div class="r" style="left:84.2px;top:614px;width:2437.8px;height:24px;background:#ffffff"></div>
<div class="r" style="left:32px;top:614px;width:50.7px;height:24px;background:#d3d9de"></div>
<div class="r" style="left:32px;top:615px;width:50.7px;height:22px;background:#4b667b"></div>
<div class="a" style="left:35.30px;top:617.13px;font-size:17.33px;font-weight:400;color:#f3f5f7;">11:00</div>
<div class="r" style="left:84.2px;top:638px;width:2437.8px;height:24px;background:#f2f4f6"></div>
<div class="r" style="left:32px;top:638px;width:50.7px;height:24px;background:#d3d9de"></div>
<div class="r" style="left:32px;top:639px;width:50.7px;height:22px;background:#4b667b"></div>
<div class="a" style="left:35.30px;top:641.13px;font-size:17.33px;font-weight:400;color:#f3f5f7;">11:30</div>
<div class="r" style="left:84.2px;top:662px;width:2437.8px;height:24px;background:#ffffff"></div>
<div class="r" style="left:32px;top:662px;width:50.7px;height:24px;background:#d3d9de"></div>
<div class="r" style="left:32px;top:663px;width:50.7px;height:22px;background:#4b667b"></div>
<div class="a" style="left:35.30px;top:665.13px;font-size:17.33px;font-weight:400;color:#f3f5f7;">12:00</div>
<div class="r" style="left:84.2px;top:686px;width:2437.8px;height:24px;background:#f2f4f6"></div>
<div class="r" style="left:32px;top:686px;width:50.7px;height:24px;background:#d3d9de"></div>
<div class="r" style="left:32px;top:687px;width:50.7px;height:22px;background:#4b667b"></div>
<div class="a" style="left:35.30px;top:689.13px;font-size:17.33px;font-weight:400;color:#f3f5f7;">12:30</div>
<div class="r" style="left:84.2px;top:710px;width:2437.8px;height:24px;background:#ffffff"></div>
<div class="r" style="left:32px;top:710px;width:50.7px;height:24px;background:#d3d9de"></div>
<div class="r" style="left:32px;top:711px;width:50.7px;height:22px;background:#4b667b"></div>
<div class="a" style="left:35.30px;top:713.13px;font-size:17.33px;font-weight:400;color:#f3f5f7;">13:00</div>
<div class="r" style="left:84.2px;top:734px;width:2437.8px;height:24px;background:#f2f4f6"></div>
<div class="r" style="left:32px;top:734px;width:50.7px;height:24px;background:#d3d9de"></div>
<div class="r" style="left:32px;top:735px;width:50.7px;height:22px;background:#4b667b"></div>
<div class="a" style="left:35.30px;top:737.13px;font-size:17.33px;font-weight:400;color:#f3f5f7;">13:30</div>
<div class="r" style="left:84.2px;top:758px;width:2437.8px;height:24px;background:#ffffff"></div>
<div class="r" style="left:32px;top:758px;width:50.7px;height:24px;background:#d3d9de"></div>
<div class="r" style="left:32px;top:759px;width:50.7px;height:22px;background:#4b667b"></div>
<div class="a" style="left:35.30px;top:761.13px;font-size:17.33px;font-weight:400;color:#f3f5f7;">14:00</div>
<div class="r" style="left:84.2px;top:782px;width:2437.8px;height:24px;background:#f2f4f6"></div>
<div class="r" style="left:32px;top:782px;width:50.7px;height:24px;background:#d3d9de"></div>
<div class="r" style="left:32px;top:783px;width:50.7px;height:22px;background:#4b667b"></div>
<div class="a" style="left:35.30px;top:785.13px;font-size:17.33px;font-weight:400;color:#f3f5f7;">14:30</div>
<div class="r" style="left:84.2px;top:806px;width:2437.8px;height:24px;background:#ffffff"></div>
<div class="r" style="left:32px;top:806px;width:50.7px;height:24px;background:#d3d9de"></div>
<div class="r" style="left:32px;top:807px;width:50.7px;height:22px;background:#4b667b"></div>
<div class="a" style="left:35.30px;top:809.13px;font-size:17.33px;font-weight:400;color:#f3f5f7;">15:00</div>
<div class="r" style="left:84.2px;top:830px;width:2437.8px;height:24px;background:#f2f4f6"></div>
<div class="r" style="left:32px;top:830px;width:50.7px;height:24px;background:#d3d9de"></div>
<div class="r" style="left:32px;top:831px;width:50.7px;height:22px;background:#4b667b"></div>
<div class="a" style="left:35.30px;top:833.13px;font-size:17.33px;font-weight:400;color:#f3f5f7;">15:30</div>
<div class="r" style="left:84.2px;top:854px;width:2437.8px;height:24px;background:#ffffff"></div>
<div class="r" style="left:32px;top:854px;width:50.7px;height:24px;background:#d3d9de"></div>
<div class="r" style="left:32px;top:855px;width:50.7px;height:22px;background:#4b667b"></div>
<div class="a" style="left:35.30px;top:857.13px;font-size:17.33px;font-weight:400;color:#f3f5f7;">16:00</div>
<div class="r" style="left:84.2px;top:878px;width:2437.8px;height:24px;background:#f2f4f6"></div>
<div class="r" style="left:32px;top:878px;width:50.7px;height:24px;background:#d3d9de"></div>
<div class="r" style="left:32px;top:879px;width:50.7px;height:22px;background:#4b667b"></div>
<div class="a" style="left:35.30px;top:881.13px;font-size:17.33px;font-weight:400;color:#f3f5f7;">16:30</div>
<div class="r" style="left:84.2px;top:902px;width:2437.8px;height:24px;background:#ffffff"></div>
<div class="r" style="left:32px;top:902px;width:50.7px;height:24px;background:#d3d9de"></div>
<div class="r" style="left:32px;top:903px;width:50.7px;height:22px;background:#4b667b"></div>
<div class="a" style="left:35.30px;top:905.13px;font-size:17.33px;font-weight:400;color:#f3f5f7;">17:00</div>
<div class="r" style="left:84.2px;top:926px;width:2437.8px;height:24px;background:#f2f4f6"></div>
<div class="r" style="left:32px;top:926px;width:50.7px;height:24px;background:#d3d9de"></div>
<div class="r" style="left:32px;top:927px;width:50.7px;height:22px;background:#4b667b"></div>
<div class="a" style="left:35.30px;top:929.13px;font-size:17.33px;font-weight:400;color:#f3f5f7;">17:30</div>
<div class="r" style="left:84.2px;top:950px;width:2437.8px;height:24px;background:#ffffff"></div>
<div class="r" style="left:32px;top:950px;width:50.7px;height:24px;background:#d3d9de"></div>
<div class="r" style="left:32px;top:951px;width:50.7px;height:22px;background:#4b667b"></div>
<div class="a" style="left:35.30px;top:953.13px;font-size:17.33px;font-weight:400;color:#f3f5f7;">18:00</div>
<div class="r" style="left:84.2px;top:974px;width:2437.8px;height:24px;background:#f2f4f6"></div>
<div class="r" style="left:32px;top:974px;width:50.7px;height:24px;background:#d3d9de"></div>
<div class="r" style="left:32px;top:975px;width:50.7px;height:22px;background:#4b667b"></div>
<div class="a" style="left:35.30px;top:977.13px;font-size:17.33px;font-weight:400;color:#f3f5f7;">18:30</div>
<div class="r" style="left:82.7px;top:422px;width:1.5px;height:575px;background:rgba(225,230,234,0.6)"></div>
<div class="r" style="left:693px;top:422px;width:2px;height:575px;background:rgba(225,230,234,0.6)"></div>
<div class="r" style="left:1302px;top:422px;width:2px;height:575px;background:rgba(225,230,234,0.6)"></div>
<div class="r" style="left:1913px;top:422px;width:2px;height:575px;background:rgba(225,230,234,0.6)"></div>
<div class="a" style="left:32.00px;top:1007.03px;font-size:17.33px;font-weight:700;color:#0b263b;">&lt;&lt; Jour précédent</div>
<div class="a" style="left:1215.80px;top:1007.03px;font-size:17.33px;font-weight:700;color:#0b263b;">Aujourd&#x27;hui</div>
<div class="a" style="left:521.80px;width:2000px;text-align:right;top:1007.03px;font-size:17.33px;font-weight:700;color:#0b263b;">Jour suivant &gt;&gt;</div>
<div class="r" style="left:32px;top:1035px;width:257px;height:30px;background:#ffffff"></div>
<div class="r" style="left:33px;top:1036px;width:127px;height:28px;background:#6fd8c4"></div>
<div class="r" style="left:161.3px;top:1036px;width:126.69999999999999px;height:28px;background:#9bcd68"></div>
<div class="a" style="left:36.30px;top:1040.63px;font-size:17.33px;font-weight:700;color:#0b263b;">Occasionnel</div>
<div class="a" style="left:164.50px;top:1040.63px;font-size:17.33px;font-weight:700;color:#0b263b;">Régulier</div>
<div class="r" style="left:0px;top:1090px;width:2553px;height:2px;background:#1b354a"></div>
<div class="r" style="left:0px;top:1182px;width:2553px;height:2px;background:#1b354a"></div>
<div class="a" style="left:32.20px;top:1098.73px;font-size:17.33px;font-weight:700;color:#0b263b;">Afficher par jour :</div>
<div class="a" style="left:32.20px;top:1118.93px;font-size:17.33px;font-weight:700;color:#0b263b;">Afficher par</div>
<div class="a" style="left:32.20px;top:1138.83px;font-size:17.33px;font-weight:700;color:#0b263b;">semaine :</div>
<div class="a" style="left:32.20px;top:1159.03px;font-size:17.33px;font-weight:700;color:#0b263b;">Afficher par mois :</div>
<div class="a" style="left:205.30px;top:1098.73px;font-size:17.33px;font-weight:700;color:#0b263b;">oct. 18<span style="font-weight:400"> | </span>oct. 19<span style="font-weight:400"> | </span>oct. 20<span style="font-weight:400"> | </span>oct. 21<span style="font-weight:400"> | </span>oct. 22<span style="font-weight:400"> | </span>oct. 23<span style="font-weight:400"> | </span><span style="color:#ff0066">[ oct. 24 ]</span><span style="font-weight:400"> | </span>oct. 25<span style="font-weight:400"> | </span>oct. 26<span style="font-weight:400"> | </span>oct. 27<span style="font-weight:400"> | </span>oct. 28<span style="font-weight:400"> | </span>oct. 29<span style="font-weight:400"> | </span>oct. 30<span style="font-weight:400"> | </span>oct. 31</div>
<div class="a" style="left:205.30px;top:1118.93px;font-size:17.33px;font-weight:700;color:#0b263b;">sept. 23<span style="font-weight:400"> | </span>sept. 30<span style="font-weight:400"> | </span>oct. 07<span style="font-weight:400"> | </span>oct. 14<span style="font-weight:400"> | </span><span style="color:#ff0066">[ oct. 21 ]</span><span style="font-weight:400"> | </span>oct. 28<span style="font-weight:400"> | </span>nov. 04<span style="font-weight:400"> | </span>nov. 11<span style="font-weight:400"> | </span>nov. 18</div>
<div class="a" style="left:205.30px;top:1159.03px;font-size:17.33px;font-weight:700;color:#0b263b;">août 2018<span style="font-weight:400"> | </span>sept. 2018<span style="font-weight:400"> | </span><span style="color:#ff0066">[ oct. 2018 ]</span><span style="font-weight:400"> | </span>nov. 2018<span style="font-weight:400"> | </span>déc. 2018<span style="font-weight:400"> | </span>janv. 2019<span style="font-weight:400"> | </span>févr. 2019<span style="font-weight:400"> | </span>mars 2019<span style="font-weight:400"> | </span>avril 2019</div>
<svg class="r" style="left:0;top:0" width="2553" height="1196" viewBox="0 0 2553 1196">
<path d="M430.2 909.9L449.3 909.9L455.4 1068.5L489.4 1067.9L448.8 1124.1L402.9 1070.9L436.4 1069.7Z" fill="#ff0000"/>
<ellipse cx="446.6" cy="1166.2" rx="65.3" ry="29.9" fill="none" stroke="#ff0000" stroke-width="4"/>
</svg>
</body></html>
